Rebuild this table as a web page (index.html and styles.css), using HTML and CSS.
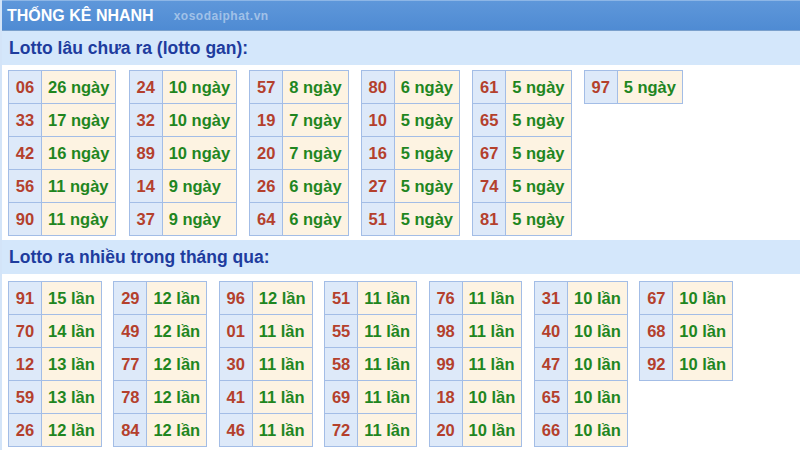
FILE: index.html
```html
<!DOCTYPE html>
<html lang="vi">
<head>
<meta charset="utf-8">
<title>Thống kê nhanh</title>
<link rel="stylesheet" href="styles.css">
</head>
<body>
<div class="box">
  <div class="title"><span class="title-text">THỐNG KÊ NHANH</span><span class="mark">xosodaiphat.vn</span></div>
  <div class="band">Lotto lâu chưa ra (lotto gan):</div>
  <div class="tables">
    <table><tr><td class="n">06</td><td class="v">26 ngày</td></tr><tr><td class="n">33</td><td class="v">17 ngày</td></tr><tr><td class="n">42</td><td class="v">16 ngày</td></tr><tr><td class="n">56</td><td class="v">11 ngày</td></tr><tr><td class="n">90</td><td class="v">11 ngày</td></tr></table>
    <table><tr><td class="n">24</td><td class="v">10 ngày</td></tr><tr><td class="n">32</td><td class="v">10 ngày</td></tr><tr><td class="n">89</td><td class="v">10 ngày</td></tr><tr><td class="n">14</td><td class="v">9 ngày</td></tr><tr><td class="n">37</td><td class="v">9 ngày</td></tr></table>
    <table><tr><td class="n">57</td><td class="v">8 ngày</td></tr><tr><td class="n">19</td><td class="v">7 ngày</td></tr><tr><td class="n">20</td><td class="v">7 ngày</td></tr><tr><td class="n">26</td><td class="v">6 ngày</td></tr><tr><td class="n">64</td><td class="v">6 ngày</td></tr></table>
    <table><tr><td class="n">80</td><td class="v">6 ngày</td></tr><tr><td class="n">10</td><td class="v">5 ngày</td></tr><tr><td class="n">16</td><td class="v">5 ngày</td></tr><tr><td class="n">27</td><td class="v">5 ngày</td></tr><tr><td class="n">51</td><td class="v">5 ngày</td></tr></table>
    <table><tr><td class="n">61</td><td class="v">5 ngày</td></tr><tr><td class="n">65</td><td class="v">5 ngày</td></tr><tr><td class="n">67</td><td class="v">5 ngày</td></tr><tr><td class="n">74</td><td class="v">5 ngày</td></tr><tr><td class="n">81</td><td class="v">5 ngày</td></tr></table>
    <table><tr><td class="n">97</td><td class="v">5 ngày</td></tr></table>
  </div>
  <div class="band band2">Lotto ra nhiều trong tháng qua:</div>
  <div class="tables tables2">
    <table><tr><td class="n">91</td><td class="v">15 lần</td></tr><tr><td class="n">70</td><td class="v">14 lần</td></tr><tr><td class="n">12</td><td class="v">13 lần</td></tr><tr><td class="n">59</td><td class="v">13 lần</td></tr><tr><td class="n">26</td><td class="v">12 lần</td></tr></table>
    <table><tr><td class="n">29</td><td class="v">12 lần</td></tr><tr><td class="n">49</td><td class="v">12 lần</td></tr><tr><td class="n">77</td><td class="v">12 lần</td></tr><tr><td class="n">78</td><td class="v">12 lần</td></tr><tr><td class="n">84</td><td class="v">12 lần</td></tr></table>
    <table><tr><td class="n">96</td><td class="v">12 lần</td></tr><tr><td class="n">01</td><td class="v">11 lần</td></tr><tr><td class="n">30</td><td class="v">11 lần</td></tr><tr><td class="n">41</td><td class="v">11 lần</td></tr><tr><td class="n">46</td><td class="v">11 lần</td></tr></table>
    <table><tr><td class="n">51</td><td class="v">11 lần</td></tr><tr><td class="n">55</td><td class="v">11 lần</td></tr><tr><td class="n">58</td><td class="v">11 lần</td></tr><tr><td class="n">69</td><td class="v">11 lần</td></tr><tr><td class="n">72</td><td class="v">11 lần</td></tr></table>
    <table><tr><td class="n">76</td><td class="v">11 lần</td></tr><tr><td class="n">98</td><td class="v">11 lần</td></tr><tr><td class="n">99</td><td class="v">11 lần</td></tr><tr><td class="n">18</td><td class="v">10 lần</td></tr><tr><td class="n">20</td><td class="v">10 lần</td></tr></table>
    <table><tr><td class="n">31</td><td class="v">10 lần</td></tr><tr><td class="n">40</td><td class="v">10 lần</td></tr><tr><td class="n">47</td><td class="v">10 lần</td></tr><tr><td class="n">65</td><td class="v">10 lần</td></tr><tr><td class="n">66</td><td class="v">10 lần</td></tr></table>
    <table><tr><td class="n">67</td><td class="v">10 lần</td></tr><tr><td class="n">68</td><td class="v">10 lần</td></tr><tr><td class="n">92</td><td class="v">10 lần</td></tr></table>
  </div>
</div>
</body>
</html>
```
FILE: styles.css
```css
html, body {
  margin: 0;
  padding: 0;
  background: #ffffff;
}
body {
  font-family: "Liberation Sans", Arial, sans-serif;
  width: 800px;
  height: 450px;
  overflow: hidden;
}
.box {
  border-left: 2px solid #d3e4f8;
  min-height: 450px;
}
.title {
  height: 29px;
  border-top: 1px solid #8db6e6;
  background: linear-gradient(#5e97da, #4f8bd3);
  border-bottom: 1px solid #7aa0cc;
  display: flex;
  align-items: center;
  padding-left: 5px;
}
.title-text {
  color: #ffffff;
  font-weight: bold;
  font-size: 16px;
}
.mark {
  margin-left: 20px;
  color: rgba(255, 255, 255, 0.45);
  font-size: 12px;
  font-weight: bold;
  letter-spacing: 0.5px;
}
.band {
  background: #d4e7fb;
  color: #1e3c9e;
  font-weight: bold;
  font-size: 17.5px;
  height: 34px;
  line-height: 34px;
  padding-left: 7px;
}
.band2 {
  margin-top: 4px;
}
.tables {
  display: flex;
  align-items: flex-start;
  gap: 12.2px;
  padding: 5px 0 0 6px;
}
.tables2 {
  gap: 11.6px;
  padding-top: 7px;
}
table {
  border-collapse: collapse;
  font-weight: bold;
  font-size: 16.5px;
}
td {
  border: 1px solid #a3bde6;
  height: 33px;
  padding: 0;
  box-sizing: border-box;
}
td.n {
  background: #dde9f9;
  color: #b4402c;
  width: 33px;
  text-align: center;
}
td.v {
  background: #fdf3e2;
  color: #1f861f;
  padding: 0 6px;
}
```
